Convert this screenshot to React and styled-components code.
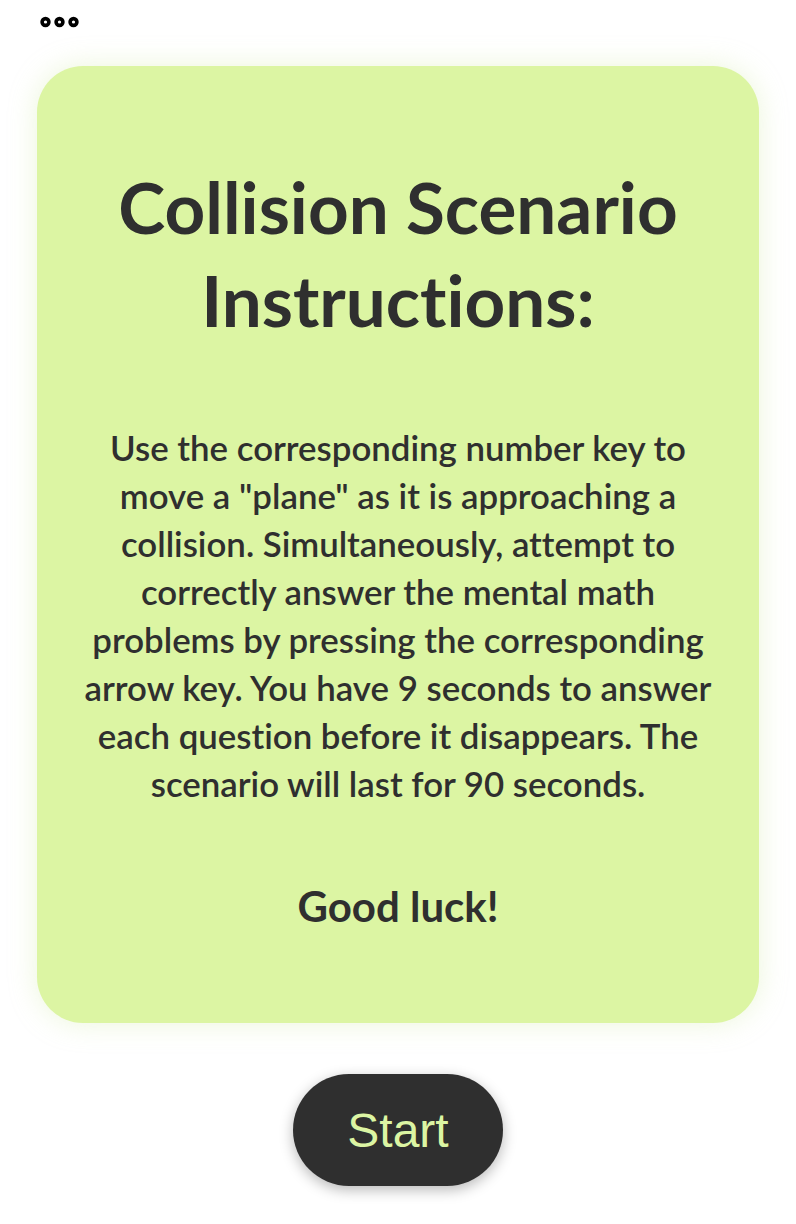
import React from 'react'
import styled, { createGlobalStyle } from 'styled-components'

const GlobalStyle = createGlobalStyle`
  body {
    margin: 0;
    background: #ffffff;
    font-family: Lato, "Noto Sans", sans-serif;
    color: #2f2f2f;
    font-variant-ligatures: none;
  }
`

const Page = styled.div`
  width: 796px;
  min-height: 1224px;
  display: flex;
  flex-direction: column;
  align-items: center;
`

const TopBar = styled.div`
  align-self: stretch;
  height: 44px;
  display: flex;
  align-items: center;
  padding-left: 39px;
  padding-bottom: 2px;
`

const Card = styled.div`
  width: 722px;
  height: 957px;
  margin-top: 20px;
  box-sizing: border-box;
  background: #dcf5a3;
  border-radius: 46px;
  box-shadow: 0 0 28px rgba(200, 230, 150, 0.35);
  display: flex;
  flex-direction: column;
  align-items: center;
  padding: 94px 40px 0;
  text-align: center;
`

const Title = styled.h1`
  margin: 0;
  font-size: 71px;
  font-weight: 700;
  line-height: 93px;
`

const Body = styled.p`
  margin: 78px 0 0;
  max-width: 640px;
  font-size: 34.8px;
  font-weight: 600;
  line-height: 48px;
`

const Luck = styled.p`
  margin: 74px 0 0;
  font-size: 42px;
  font-weight: 700;
  line-height: 48px;
`

const StartButton = styled.button`
  margin-top: 51px;
  width: 210px;
  height: 112px;
  border: none;
  border-radius: 56px;
  background: #2f2f2f;
  color: #dcf5a3;
  font-family: "Liberation Sans", Arial, sans-serif;
  font-size: 48px;
  box-shadow: 0 4px 14px rgba(0, 0, 0, 0.28);
  cursor: pointer;
`

const Dots = () => (
  <svg width="46" height="14" viewBox="0 0 46 14">
    {[6.5, 20.5, 34.5].map((cx) => (
      <circle key={cx} cx={cx} cy="7" r="3.4" fill="#ffffff" stroke="#000" strokeWidth="3.6" />
    ))}
  </svg>
)

const App = () => {
  return (
    <Page>
      <GlobalStyle />
      <TopBar>
        <Dots />
      </TopBar>
      <Card>
        <Title>
          Collision Scenario
          <br />
          Instructions:
        </Title>
        <Body>
          Use the corresponding number key to move a "plane" as it is approaching a
          collision. Simultaneously, attempt to correctly answer the mental math
          problems by pressing the corresponding arrow key. You have 9 seconds to
          answer each question before it disappears. The scenario will last for 90
          seconds.
        </Body>
        <Luck>Good luck!</Luck>
      </Card>
      <StartButton>Start</StartButton>
    </Page>
  )
}

export default App
